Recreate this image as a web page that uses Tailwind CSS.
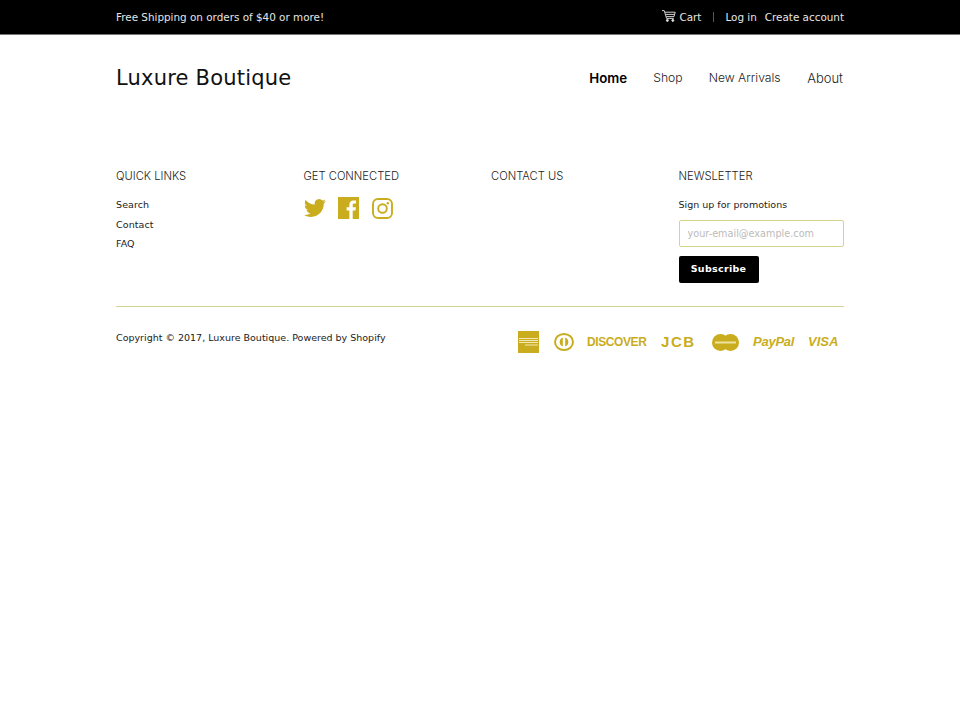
<!DOCTYPE html>
<html lang="en">
<head>
    <meta charset="utf-8">
    <meta name="viewport" content="width=device-width, initial-scale=1.0">
    <title>Luxure Boutique</title>
    <script src="https://cdn.jsdelivr.net/npm/@tailwindcss/browser@4"></script>
</head>
<body class="bg-white text-[#222] font-['DejaVu_Sans',sans-serif]">

<!-- Top bar -->
<div class="h-[35px] bg-black border-b border-[#777] text-[#e6e6e6] text-[10.4px]">
    <div class="w-[728px] mx-auto flex items-center justify-between h-[34px] pt-[1px]">
        <p>Free Shipping on orders of $40 or more!</p>
        <div class="flex items-center">
            <svg class="w-[14px] h-[12px] mr-[3px] mb-[3px]" viewBox="0 0 14 12" fill="none" stroke="#e6e6e6" stroke-width="0.9">
                <path d="M0 .6h2.2L4.6 8.4h7.2"/>
                <path d="M3 2.2h10.2L12 6.6H4.3"/>
                <path d="M3.6 4.4h9"/>
                <circle cx="5.4" cy="10.4" r="1" fill="#e6e6e6"/>
                <circle cx="10.8" cy="10.4" r="1" fill="#e6e6e6"/>
            </svg>
            <a href="#">Cart</a>
            <span class="w-px h-[10px] bg-[#555] ml-[12px] mr-[11px]"></span>
            <a href="#">Log in</a>
            <a href="#" class="ml-[8px]">Create account</a>
        </div>
    </div>
</div>

<div class="w-[728px] mx-auto">
    <!-- Header -->
    <header class="flex items-center justify-between h-[87px]">
        <a href="#" class="text-[21px] tracking-[0.2px] text-[#111] pt-[1px]">Luxure Boutique</a>
        <nav class="flex items-center pr-[1px] font-['Inter',sans-serif] font-light text-[#222]">
            <a href="#" class="text-[13.3px] font-semibold text-black">Home</a>
            <a href="#" class="ml-[26px] text-[12.2px]">Shop</a>
            <a href="#" class="ml-[26px] text-[12.2px]">New Arrivals</a>
            <a href="#" class="ml-[26.5px] text-[13px]">About</a>
        </nav>
    </header>

    <!-- Footer -->
    <footer class="mt-[45px]">
        <div class="grid grid-cols-4 gap-x-[22px] h-[139px]">
            <div>
                <h4 class="text-[11.2px] leading-[18px] font-['Inter',sans-serif] font-light">QUICK LINKS</h4>
                <ul class="mt-[10px] text-[9.5px] leading-[19.5px] tracking-[0.1px]">
                    <li><a href="#">Search</a></li>
                    <li><a href="#">Contact</a></li>
                    <li><a href="#">FAQ</a></li>
                </ul>
            </div>
            <div>
                <h4 class="text-[11.2px] leading-[18px] font-['Inter',sans-serif] font-light">GET CONNECTED</h4>
                <div class="flex items-center mt-[12px] text-[#c9ad1e]">
                    <svg class="w-[22px] h-[22px]" viewBox="0 0 24 24" fill="currentColor"><path d="M23.95 4.57a10 10 0 0 1-2.82.77 4.96 4.96 0 0 0 2.16-2.72c-.95.55-2 .96-3.13 1.19a4.92 4.92 0 0 0-8.38 4.48C7.69 8.1 4.07 6.13 1.64 3.16a4.82 4.82 0 0 0-.67 2.48c0 1.71.87 3.21 2.19 4.1a4.9 4.9 0 0 1-2.23-.62v.06a4.92 4.92 0 0 0 3.95 4.83 5 5 0 0 1-2.21.08 4.94 4.94 0 0 0 4.6 3.42A9.87 9.87 0 0 1 0 19.54a14 14 0 0 0 7.56 2.21c9.05 0 14-7.5 14-13.98 0-.21 0-.42-.02-.63a9.94 9.94 0 0 0 2.41-2.57z"/></svg>
                    <svg class="w-[21px] h-[22px] ml-[12px]" viewBox="0 0 22 22" preserveAspectRatio="none" fill="currentColor"><path d="M0 0h22v22h-6.6v-8.5h2.9l.4-3.3h-3.3V8.1c0-1 .3-1.6 1.6-1.6h1.8V3.6c-.3 0-1.4-.1-2.6-.1-2.6 0-4.3 1.6-4.3 4.4v2.3H9v3.3h2.9V22H0z"/></svg>
                    <svg class="w-[21px] h-[21px] ml-[13px]" viewBox="0 0 21 21" fill="none" stroke="currentColor" stroke-width="1.9">
                        <rect x="1" y="1" width="19" height="19" rx="5"/>
                        <circle cx="10.5" cy="10.5" r="4.3"/>
                        <circle cx="15.8" cy="5.2" r="1.2" fill="currentColor" stroke="none"/>
                    </svg>
                </div>
            </div>
            <div>
                <h4 class="text-[11.2px] leading-[18px] font-['Inter',sans-serif] font-light">CONTACT US</h4>
            </div>
            <div>
                <h4 class="text-[11.2px] leading-[18px] font-['Inter',sans-serif] font-light">NEWSLETTER</h4>
                <p class="mt-[10px] text-[9.5px] leading-[19.5px]">Sign up for promotions</p>
                <input type="email" placeholder="your-email@example.com" class="block mt-[5.5px] w-full h-[27px] px-[8px] rounded-[2px] border border-[#d3d58f] text-[9.7px] placeholder:text-[#bbb]">
                <button class="block mt-[9px] w-[80px] h-[27px] rounded-[2px] bg-black text-white text-[9.5px] font-bold tracking-[0.3px]">Subscribe</button>
            </div>
        </div>

        <div class="border-t border-[#d3d58f]"></div>

        <div class="flex justify-between items-start pt-[23px]">
            <p class="text-[9.5px] leading-[15px]">Copyright © 2017, Luxure Boutique. Powered by Shopify</p>
            <div class="flex items-center h-[22px] mt-[1px] pr-[6px] text-[#c9ad1e]">
                <!-- amex -->
                <svg class="w-[21px] h-[22px]" viewBox="0 0 21 22">
                    <rect width="21" height="22" fill="#c9ad1e"/>
                    <rect x="1" y="7" width="19" height="1" fill="#f3e9b4"/>
                    <rect x="1" y="9" width="19" height="1" fill="#f3e9b4"/>
                    <rect x="1" y="11" width="19" height="1" fill="#f3e9b4"/>
                    <rect x="7" y="13.5" width="13" height="1" fill="#f3e9b4"/>
                </svg>
                <!-- diners -->
                <svg class="w-[20px] h-[18px] ml-[15px]" viewBox="0 0 20 18">
                    <ellipse cx="10" cy="9" rx="9" ry="8" fill="none" stroke="#c9ad1e" stroke-width="2"/>
                    <path d="M8.8 4.5a4.8 4.8 0 0 0 0 9zM11.2 4.5a4.8 4.8 0 0 1 0 9z" fill="#c9ad1e"/>
                </svg>
                <span class="ml-[13px] w-[60px] text-[12px] font-['Liberation_Sans',sans-serif] font-bold tracking-[-0.4px]">DISCOVER</span>
                <span class="ml-[14px] w-[37px] text-[15px] font-['Liberation_Sans',sans-serif] font-bold tracking-[1.6px]">JCB</span>
                <!-- mastercard -->
                <svg class="w-[27px] h-[17px] ml-[14px]" viewBox="0 0 27 17">
                    <circle cx="8.5" cy="8.5" r="8.5" fill="#c9ad1e"/>
                    <circle cx="18.5" cy="8.5" r="8.5" fill="#c9ad1e"/>
                    <rect x="3" y="7.5" width="21" height="2" fill="#efe3a4"/>
                </svg>
                <span class="ml-[14px] w-[40px] text-[13px] italic font-['Liberation_Sans',sans-serif] font-bold tracking-[-0.25px]">PayPal</span>
                <span class="ml-[15px] w-[30px] text-[13px] italic font-['Liberation_Sans',sans-serif] font-bold">VISA</span>
            </div>
        </div>
    </footer>
</div>

</body>
</html>
